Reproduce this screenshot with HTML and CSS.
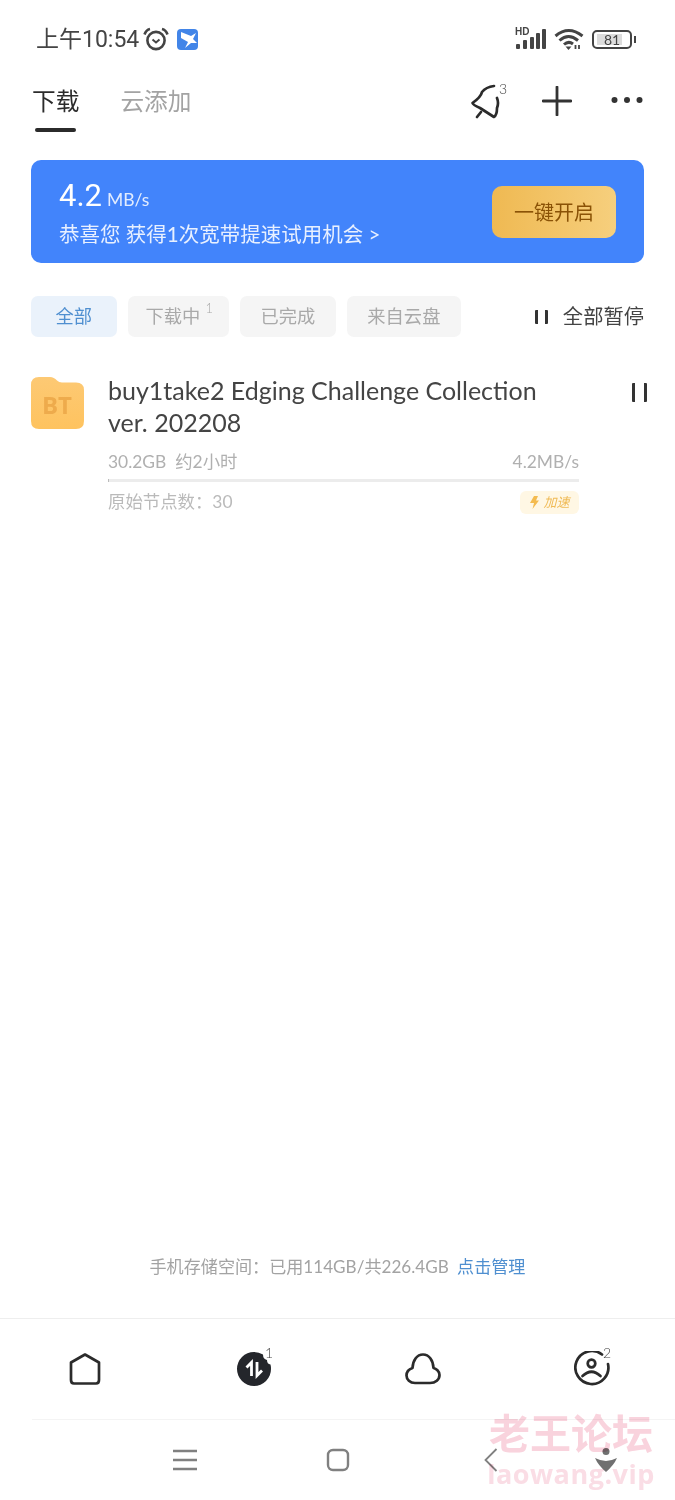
FILE: index.html
```html
<!DOCTYPE html>
<html lang="zh-CN">

<head>
  <meta charset="UTF-8">
  <title>下载</title>
  <link rel="stylesheet" href="styles.css">
</head>

<body>
  <div class="page">
    <div class="status">
      <div class="status-left">
        <span class="clock">上午10:54</span>
        <svg class="alarm" width="26" height="24" viewBox="0 0 26 24" fill="none" stroke="#444" stroke-width="2.6">
          <circle cx="13" cy="13.5" r="8.6" />
          <path d="M9.5 12.5l3.5 3 3.5-3" stroke-width="2" />
          <path d="M1.5 7.5Q3 3 7 2M24.500 7.500Q23 3 19 2" />
        </svg>
        <svg class="bird" width="21" height="21" viewBox="0 0 21 21">
          <rect width="21" height="21" rx="4" fill="#4285e8" />
          <path d="M4 3L14 7L19 4L16 10L20 14H14L8 19L11 13L4 9z" fill="#fff" />
        </svg>
      </div>
      <div class="status-right">
        <div class="signal">
          <span class="hd">HD</span>
          <svg width="31" height="20" viewBox="0 0 31 20" fill="#444">
            <rect x="0" y="15" width="4" height="5" rx="1" />
            <rect x="7" y="11" width="4" height="9" rx="1" />
            <rect x="14" y="8" width="4" height="12" rx="1" />
            <rect x="20" y="4" width="4" height="16" rx="1" />
            <rect x="26" y="0" width="4" height="20" rx="1" />
          </svg>
        </div>
        <svg class="wifi" width="30" height="22" viewBox="0 0 30 22" fill="none" stroke="#444" stroke-width="3">
          <path d="M1.500 8Q14.500-3 28.500 8M5.500 12.500Q14.500 4.500 24 12.500M10 16.500Q14.500 12.500 19 16" />
          <path d="M11.500 18.500h6l-3 3.500z" fill="#444" stroke="none" />
          <path d="M21.500 17v4M25 17v4" stroke-width="1.800" />
        </svg>
        <div class="battery">
          <div class="battery-body"><span class="battery-fill"></span><span class="battery-num">81</span></div>
          <span class="battery-tip"></span>
        </div>
      </div>
    </div>

    <div class="topbar">
      <div class="tabs">
        <div class="tab active">下载</div>
        <div class="tab">云添加</div>
      </div>
      <div class="actions">
        <div class="bell">
          <svg width="32" height="36" viewBox="0 0 32 36" fill="none" stroke="#2b2b2b" stroke-width="2.700" stroke-linecap="round" stroke-linejoin="round">
            <path d="M23 3Q15 4 11 9Q10 14 1.500 20Q2 22 9 25L23 34Q26 32 26 25Q28 20 26 15" />
            <path d="M10 29l-4 5" />
          </svg>
          <sup class="mini">3</sup>
        </div>
        <svg width="30" height="30" viewBox="0 0 30 30" stroke="#333" stroke-width="2.800" stroke-linecap="round">
          <path d="M15 1v28M1 15h28" />
        </svg>
        <svg class="dots" width="32" height="8" viewBox="0 0 32 8" fill="#333">
          <circle cx="3.500" cy="4" r="3" />
          <circle cx="16" cy="4" r="3" />
          <circle cx="28.500" cy="4" r="3" />
        </svg>
      </div>
    </div>

    <div class="banner">
      <div>
        <div class="speed"><span class="speed-num">4.2</span><span class="speed-unit">MB/s</span></div>
        <div class="promo">恭喜您 获得1次宽带提速试用机会 &gt;</div>
      </div>
      <div class="banner-btn">一键开启</div>
    </div>

    <div class="filters">
      <div class="chip selected">全部</div>
      <div class="chip counted">下载中<sup class="chip-count">1</sup></div>
      <div class="chip">已完成</div>
      <div class="chip">来自云盘</div>
      <div class="pause-all"><span class="bars small"></span>全部暂停</div>
    </div>

    <div class="main">
      <div class="task">
        <svg class="folder" width="53" height="53" viewBox="0 0 53 53">
          <defs>
            <linearGradient id="fold" x1="0" y1="0" x2="0" y2="1">
              <stop offset="0" stop-color="#fdc974" />
              <stop offset="1" stop-color="#fec35f" />
            </linearGradient>
          </defs>
          <path d="M8 0H19Q23 0 26 3.500Q28 5.500 31 5.500H45Q53 5.500 53 13V44Q53 52 45 52H8Q0 52 0 44V8Q0 0 8 0z" fill="url(#fold)" />
          <text x="26" y="37" text-anchor="middle" class="folder-label">BT</text>
        </svg>
        <div class="task-body">
          <div class="task-name">buy1take2 Edging Challenge Collection<br>ver. 202208</div>
          <div class="task-row meta">
            <span>30.2GB&nbsp; 约2小时</span>
            <span>4.2MB/s</span>
          </div>
          <div class="progress"></div>
          <div class="task-row nodes">
            <span>原始节点数：30</span>
            <span class="boost">
              <svg width="10" height="13" viewBox="0 0 10 13" fill="#f4bb4f"><path d="M5 0h4L7 4.500h3L3.500 13 5 7H1z" /></svg>
              <i>加速</i>
            </span>
          </div>
        </div>
        <span class="bars"></span>
      </div>
    </div>

    <div class="storage">手机存储空间：已用114GB/共226.4GB <a class="manage">点击管理</a></div>

    <div class="tabbar">
      <div class="tabbar-item">
        <svg width="32" height="32" viewBox="0 0 32 32" fill="none" stroke="#2b2b2b" stroke-width="2.700" stroke-linejoin="round">
          <path d="M16 1.500L30 9.500V27Q30 30.500 27 30.500H5Q2 30.500 2 27V9.500z" />
        </svg>
      </div>
      <div class="tabbar-item">
        <svg width="36" height="36" viewBox="0 0 36 36">
          <path d="M18 1Q23 1 27 3.500Q27 8 31 9Q31 13 34.500 13.500Q35 15.500 35 18A17 17 0 1 1 18 1z" fill="#24262b" />
          <path d="M15.500 25V11.500L10.500 16.500M21 11V24.500L26 19.500" stroke="#fff" stroke-width="2.800" fill="none" />
        </svg>
        <sup class="mini dock">1</sup>
      </div>
      <div class="tabbar-item">
        <svg width="36" height="32" viewBox="0 0 36 32" fill="none" stroke="#2b2b2b" stroke-width="2.700" stroke-linejoin="round">
          <path d="M10 30H25C30.500 30 34.500 26.500 34.500 22C34.500 18 31 15.500 28.500 15C28 7 24 1.500 18 1.500C12 1.500 8 7 7.500 15C4.500 16 1.500 18.500 1.500 22.500C1.500 26.500 5 30 10 30z" />
        </svg>
      </div>
      <div class="tabbar-item">
        <svg width="36" height="36" viewBox="0 0 36 36" fill="none" stroke="#2b2b2b" stroke-width="2.700" stroke-linecap="round">
          <path d="M28 3.500A16.500 16.500 0 1 0 34 13" />
          <circle cx="17.500" cy="12.500" r="3.800" />
          <path d="M8.500 25Q17.500 16.500 26.500 25" />
        </svg>
        <sup class="mini dock">2</sup>
      </div>
    </div>

    <div class="navbar">
      <svg width="24" height="22" viewBox="0 0 24 22" stroke="#808080" stroke-width="2.400">
        <path d="M0 2h24M0 11h24M0 20h24" />
      </svg>
      <svg class="nav-home" width="24" height="24" viewBox="0 0 24 24" fill="none" stroke="#808080" stroke-width="2.400">
        <rect x="2" y="2" width="20" height="20" rx="5" />
      </svg>
      <svg class="nav-back" width="14" height="24" viewBox="0 0 14 24" fill="none" stroke="#808080" stroke-width="1.800">
        <path d="M12.500 1L1.500 12l11 11" />
      </svg>
      <svg class="nav-down" width="22" height="24" viewBox="0 0 22 24" fill="#707070">
        <circle cx="11" cy="3.500" r="3.500" />
        <path d="M0 10Q6 13 11 13Q16 13 22 10Q19 17 11 24Q3 17 0 10z" />
      </svg>
    </div>

    <div class="watermark">
      <div class="wm-cn">老王论坛</div>
      <div class="wm-en">laowang.vip</div>
    </div>
  </div>
</body>

</html>
```

FILE: styles.css
```css
body {
  margin: 0;
  background: #fff;
  color: #333;
  font-family: "Lato", "Noto Sans CJK SC", sans-serif;
  --line: #eeeeee;
  --muted: #b0b0b0;
}

.page {
  position: relative;
  width: 675px;
  height: 1500px;
  display: flex;
  flex-direction: column;
  overflow: hidden;
}

sup {
  line-height: 1;
}

/* status bar */
.status {
  height: 78px;
  box-sizing: border-box;
  padding: 0 39px 0 36px;
  display: flex;
  align-items: center;
  justify-content: space-between;
}

.status-left,
.status-right {
  display: flex;
  align-items: center;
}

.clock {
  margin-top: -4px;
  font-family: "Roboto", "Noto Sans CJK SC", sans-serif;
  font-size: 23px;
  color: #444;
}

.alarm {
  margin-left: 4px;
}

.bird {
  margin-left: 8px;
}

.signal {
  position: relative;
  width: 31px;
  height: 20px;
}

.signal svg {
  position: absolute;
  left: 0;
  top: 0;
}

.hd {
  position: absolute;
  left: -1px;
  top: -3px;
  font: bold 10px "Liberation Sans", sans-serif;
  color: #444;
}

.wifi {
  margin-left: 7px;
}

.battery {
  margin-left: 8px;
  display: flex;
  align-items: center;
}

.battery-body {
  position: relative;
  width: 36px;
  height: 15px;
  border: 2px solid #444;
  border-radius: 5px;
  display: flex;
  align-items: center;
  justify-content: center;
}

.battery-fill {
  position: absolute;
  left: 3px;
  top: 2px;
  bottom: 2px;
  width: 25px;
  background: #dcdcdc;
}

.battery-num {
  position: relative;
  font-size: 14px;
  color: #444;
}

.battery-tip {
  width: 2px;
  height: 7px;
  margin-left: 2px;
  background: #444;
}

/* top tabs */
.topbar {
  height: 82px;
  padding: 0 32px;
  display: flex;
  justify-content: space-between;
}

.tabs {
  display: flex;
  gap: 41px;
}

.tab {
  position: relative;
  padding-top: 6px;
  font-size: 23.700px;
  line-height: 34px;
  color: #a3a3a3;
}

.tab.active {
  color: #2b2b2b;
}

.tab.active::after {
  content: "";
  position: absolute;
  left: 3px;
  right: 3px;
  top: 50px;
  height: 4px;
  border-radius: 2px;
  background: #2b2b2b;
}

.actions {
  height: 46px;
  display: flex;
  align-items: center;
  gap: 39px;
}

.dots {
  margin-top: -2px;
}

.bell {
  position: relative;
  width: 32px;
  height: 36px;
}

.mini {
  position: absolute;
  font-size: 14px;
  font-weight: 300;
  color: #444;
}

.bell .mini {
  left: 28px;
  top: -1px;
}

/* banner */
.banner {
  height: 103px;
  margin: 0 31px;
  padding: 0 28px;
  border-radius: 10px;
  background: #4284fb;
  color: #fff;
  display: flex;
  align-items: center;
  justify-content: space-between;
}

.speed {
  display: flex;
  align-items: baseline;
  line-height: 42px;
}

.speed-num {
  font-family: "Roboto", sans-serif;
  font-size: 31px;
}

.speed-unit {
  margin-left: 5px;
  font-size: 17.500px;
  opacity: .85;
}

.promo {
  margin-top: -1px;
  font-size: 20.500px;
  line-height: 28px;
  color: #e8f0ff;
}

.banner-btn {
  width: 124px;
  height: 52px;
  border-radius: 10px;
  background: linear-gradient(90deg, #efb952, #f6cf7d);
  color: #8a5206;
  font-size: 20px;
  line-height: 52px;
  text-align: center;
}

/* filter chips */
.filters {
  margin: 33px 31px 0;
  display: flex;
  align-items: center;
  gap: 11px;
}

.chip {
  height: 41px;
  padding: 0 20.500px;
  border-radius: 7px;
  background: #f5f5f5;
  color: #a9a9a9;
  font-size: 18.300px;
  line-height: 41px;
  display: flex;
}

.chip.selected {
  padding: 0 24.500px;
  background: #eaf2fb;
  color: #4f8fd0;
}

.chip.counted {
  padding: 0 16px 0 18px;
}

.chip-count {
  margin: 6px 0 0 5px;
  font-size: 13px;
  font-weight: 300;
}

.pause-all {
  margin-left: auto;
  display: flex;
  align-items: center;
  gap: 15px;
  font-size: 20.300px;
  line-height: 41px;
  color: #444;
}

.bars {
  width: 13px;
  height: 18px;
  box-sizing: border-box;
  border-left: 3px solid #333;
  border-right: 3px solid #333;
  border-radius: 1px;
}

.bars.small {
  height: 14px;
}

/* download row */
.main {
  flex: 1;
  padding: 40px 27px 0 31px;
}

.task {
  display: flex;
  align-items: flex-start;
}

.folder {
  flex: none;
}

.folder-label {
  font: bold 24px "Open Sans", sans-serif;
  fill: #eeab4c;
}

.task-body {
  width: 471px;
  margin-left: 24px;
}

.task-name {
  margin-top: -3px;
  font-size: 25px;
  line-height: 32px;
  color: #444;
}

.task-row {
  display: flex;
  justify-content: space-between;
  align-items: center;
}

.meta {
  margin-top: 12px;
  font-size: 17.400px;
  line-height: 24px;
  color: var(--muted);
}

.progress {
  height: 3px;
  margin-top: 5px;
  border-left: 1px solid #bbb;
  background: #ececec;
}

.nodes {
  margin-top: 8px;
  font-size: 17.400px;
  line-height: 24px;
  color: #bababa;
}

.boost {
  width: 59px;
  height: 23px;
  border-radius: 6px;
  background: #fff7e4;
  display: flex;
  align-items: center;
  justify-content: center;
  gap: 4px;
  color: #f0bb57;
  font-size: 13px;
}

.task>.bars {
  flex: none;
  width: 15px;
  height: 19px;
  margin: 6px 0 0 53px;
}

/* footer */
.storage {
  height: 62px;
  text-align: center;
  font-size: 17.100px;
  line-height: 22px;
  color: #a3a3a3;
}

.manage {
  margin-left: 4px;
  color: #4f8fd0;
}

.tabbar {
  height: 100px;
  border-top: 1px solid var(--line);
  display: grid;
  grid-template-columns: repeat(4, 169px);
}

.tabbar-item {
  position: relative;
  display: flex;
  align-items: center;
  justify-content: center;
}

.mini.dock {
  left: 96px;
  top: 27px;
}

.navbar {
  height: 80px;
  margin-left: 32px;
  border-top: 1px solid #f4f4f4;
  padding-left: 141px;
  display: flex;
  align-items: center;
}

.nav-home {
  margin-left: 129px;
}

.nav-back {
  margin-left: 134px;
}

.nav-down {
  margin-left: 97px;
}

/* watermark sits on top of the nav bar */
.watermark {
  position: absolute;
  left: 486px;
  top: 1411px;
  width: 170px;
  text-align: center;
  font-weight: bold;
  mix-blend-mode: multiply;
  pointer-events: none;
}

.wm-cn {
  font-size: 41px;
  line-height: 46px;
  color: #f9d3dd;
  white-space: nowrap;
}

.wm-en {
  margin-top: 2px;
  font-family: "Open Sans", sans-serif;
  font-size: 27px;
  line-height: 30px;
  color: #fadde5;
  letter-spacing: .5px;
}
```
